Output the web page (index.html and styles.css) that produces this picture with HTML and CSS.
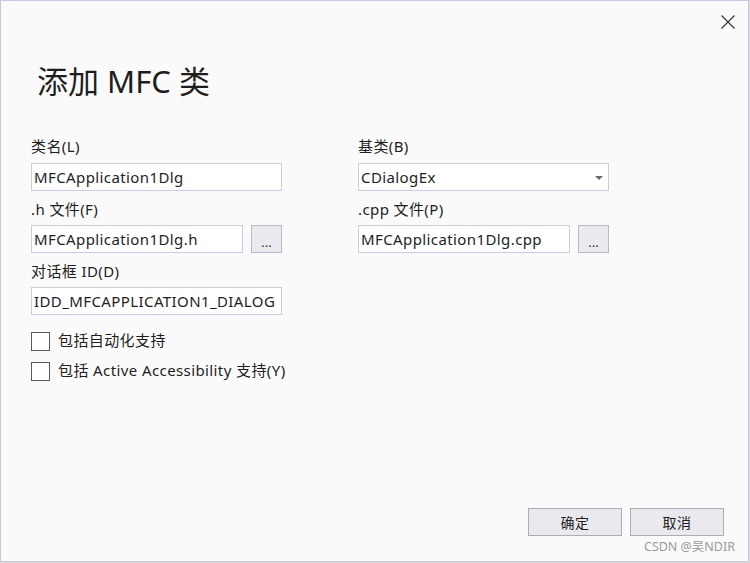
FILE: index.html
```html
<!DOCTYPE html>
<html lang="zh-CN">
<head>
<meta charset="utf-8">
<title>添加 MFC 类</title>
<link rel="stylesheet" href="styles.css">
</head>
<body>
<div class="window">
  <button class="close" aria-label="关闭">
    <svg width="14" height="14" viewBox="0 0 14 14"><path d="M0.5 0.5 L13.5 13.5 M13.5 0.5 L0.5 13.5" stroke="#333" stroke-width="1.1" fill="none"/></svg>
  </button>
  <h1 class="title">添加 MFC 类</h1>
  <div class="form">
    <div class="col">
      <div class="field">
        <label class="label">类名(L)</label>
        <div class="input">MFCApplication1Dlg</div>
      </div>
      <div class="field">
        <label class="label">.h 文件(F)</label>
        <div class="input-row">
          <div class="input grow">MFCApplication1Dlg.h</div>
          <button class="browse">...</button>
        </div>
      </div>
      <div class="field">
        <label class="label">对话框 ID(D)</label>
        <div class="input">IDD_MFCAPPLICATION1_DIALOG</div>
      </div>
    </div>
    <div class="col">
      <div class="field">
        <label class="label">基类(B)</label>
        <div class="input combo">CDialogEx<span class="arrow"></span></div>
      </div>
      <div class="field">
        <label class="label">.cpp 文件(P)</label>
        <div class="input-row">
          <div class="input grow">MFCApplication1Dlg.cpp</div>
          <button class="browse">...</button>
        </div>
      </div>
    </div>
  </div>
  <div class="checks">
    <div class="check"><span class="box"></span><span>包括自动化支持</span></div>
    <div class="check"><span class="box"></span><span>包括 Active Accessibility 支持(Y)</span></div>
  </div>
  <div class="footer">
    <button class="btn">确定</button>
    <button class="btn">取消</button>
  </div>
  <div class="watermark">CSDN @吴NDIR</div>
</div>
</body>
</html>
```
FILE: styles.css
```css
html, body {
  margin: 0;
  padding: 0;
}
body {
  width: 750px;
  height: 563px;
  background: #d9d9e3;
  font-family: "Noto Sans", "Noto Sans CJK SC", sans-serif;
  font-size: 15px;
  letter-spacing: 0.4px;
  color: #1e1e1e;
  overflow: hidden;
}
.window {
  position: relative;
  box-sizing: border-box;
  width: 749px;
  height: 562px;
  background: #fafafa;
  border: 1px solid #c9c9dc;
  padding: 0 30px;
  display: flex;
  flex-direction: column;
}
.close {
  position: absolute;
  top: 14px;
  right: 13px;
  width: 14px;
  height: 14px;
  padding: 0;
  border: 0;
  background: none;
  display: flex;
}
.title {
  margin: 60px 0 0 6px;
  font-size: 31px;
  font-weight: normal;
  letter-spacing: 0;
  line-height: 40px;
  height: 40px;
  color: #1e1e1e;
}
.form {
  margin-top: 28px;
  display: flex;
  gap: 76px;
}
.col {
  width: 251px;
  display: flex;
  flex-direction: column;
}
.label {
  display: flex;
  align-items: center;
  height: 34px;
  box-sizing: border-box;
  line-height: 1;
}
.field + .field .label {
  padding-top: 2px;
}
.input {
  box-sizing: border-box;
  height: 28px;
  border: 1px solid #ccccdc;
  background: #fff;
  padding: 0 2px;
  display: flex;
  align-items: center;
  white-space: nowrap;
  position: relative;
}
.input-row {
  display: flex;
  gap: 8px;
}
.grow {
  flex: 1;
}
.browse {
  box-sizing: border-box;
  width: 31px;
  height: 28px;
  border: 1px solid #b9b9c8;
  background: #ebebef;
  font-family: inherit;
  font-size: 13px;
  letter-spacing: 0;
  color: #333;
  padding: 6px 0 0;
  line-height: 1;
}
.combo .arrow {
  position: absolute;
  right: 5px;
  top: 12px;
  width: 0;
  height: 0;
  border-left: 4px solid transparent;
  border-right: 4px solid transparent;
  border-top: 4px solid #6a6a6a;
}
.checks {
  margin-top: 17px;
  display: flex;
  flex-direction: column;
  gap: 11px;
}
.check {
  display: flex;
  align-items: center;
  gap: 8px;
  height: 19px;
  line-height: 1;
}
.check span:last-child {
  position: relative;
  top: -1px;
}
.box {
  box-sizing: border-box;
  width: 19px;
  height: 19px;
  border: 1px solid #5a5a5a;
  background: #fff;
}
.footer {
  margin-top: auto;
  margin-right: -6px;
  padding-bottom: 25px;
  display: flex;
  justify-content: flex-end;
  gap: 8px;
}
.btn {
  box-sizing: border-box;
  width: 94px;
  height: 28px;
  border: 1px solid #adadb5;
  background: #e9e9ee;
  font-family: inherit;
  font-size: 14px;
  letter-spacing: 0.4px;
  color: #1e1e1e;
  padding: 0;
}
.watermark {
  position: absolute;
  right: 13px;
  bottom: 6px;
  font-size: 12.5px;
  letter-spacing: 0;
  color: #9a9a9a;
}
```
